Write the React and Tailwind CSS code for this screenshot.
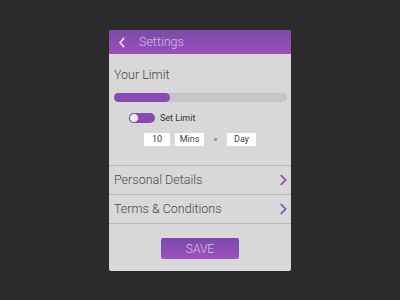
import React from 'react';

const Chevron = ({ className }) => (
  <svg viewBox="0 0 10 14" className={className} fill="none" stroke="currentColor" strokeWidth="2" strokeLinecap="square">
    <path d="M2.5 2 L7.5 7 L2.5 12" />
  </svg>
);

const App = () => {
  return (
    <div className="w-[400px] h-[300px] bg-[#2b2b2b] flex justify-center pt-[30px] font-['Roboto',sans-serif]">
      <div className="w-[182px] h-[241px] bg-[#d8d8d8] rounded-b-[2px] flex flex-col">
        {/* Header */}
        <div className="h-[24px] bg-gradient-to-b from-[#7a4aa8] to-[#9c4fbe] flex items-center pl-[9px]">
          <svg viewBox="0 0 10 14" className="w-[8px] h-[11px] text-[#e6d8f0]" fill="none" stroke="currentColor" strokeWidth="2.2" strokeLinecap="square">
            <path d="M7 2 L2.5 7 L7 12" />
          </svg>
          <span className="ml-[13px] text-[12.5px] font-light text-[#d4bde6] leading-none">Settings</span>
        </div>

        {/* Limit */}
        <div className="px-[5px] pt-[13px]">
          <div className="text-[12.5px] font-light text-[#444] leading-[16px]">Your Limit</div>
          <div className="mt-[10px] h-[9px] w-[173px] rounded-full bg-[#c5c5c5]">
            <div className="h-full w-[56px] rounded-full bg-[#8849b4]" />
          </div>
          <div className="mt-[11px] flex items-center pl-[15px]">
            <div className="relative w-[26px] h-[10px] rounded-full bg-[#8849b4]">
              <div className="absolute left-0 top-0 w-[10px] h-[10px] rounded-full bg-[#f2f2f2] border border-[#8849b4]" />
            </div>
            <span className="ml-[5px] text-[9px] text-[#333] leading-none">Set Limit</span>
          </div>
          <div className="mt-[10px] flex items-center pl-[30px] text-[9px] text-[#444]">
            <div className="w-[26px] h-[13px] bg-white flex items-center justify-center">10</div>
            <div className="ml-[5px] w-[29px] h-[13px] bg-white flex items-center justify-center">Mins</div>
            <div className="ml-[10px] w-[3px] h-[3px] bg-[#9a9a9a]" />
            <div className="ml-[10px] w-[29px] h-[13px] bg-white flex items-center justify-center">Day</div>
          </div>
        </div>

        {/* Rows */}
        <div className="mt-[19px] border-t border-[#b8b8b8]">
          <div className="h-[29px] flex items-center justify-between pl-[5px] pr-[3px] border-b border-[#b8b8b8]">
            <span className="text-[12.5px] font-light text-[#4a4a4a]">Personal Details</span>
            <Chevron className="w-[9px] h-[12px] text-[#8a4bbf]" />
          </div>
          <div className="h-[29px] flex items-center justify-between pl-[5px] pr-[3px] border-b border-[#b8b8b8]">
            <span className="text-[12.5px] font-light text-[#4a4a4a]">Terms &amp; Conditions</span>
            <Chevron className="w-[9px] h-[12px] text-[#8a4bbf]" />
          </div>
        </div>

        <div className="flex justify-center mt-[14px]">
          <button className="w-[78px] h-[21px] rounded-[2px] bg-gradient-to-b from-[#7a4aa8] to-[#a050c0] text-[12px] font-light text-[#d8c4ea] leading-none">
            SAVE
          </button>
        </div>
      </div>
    </div>
  );
};

export default App;
